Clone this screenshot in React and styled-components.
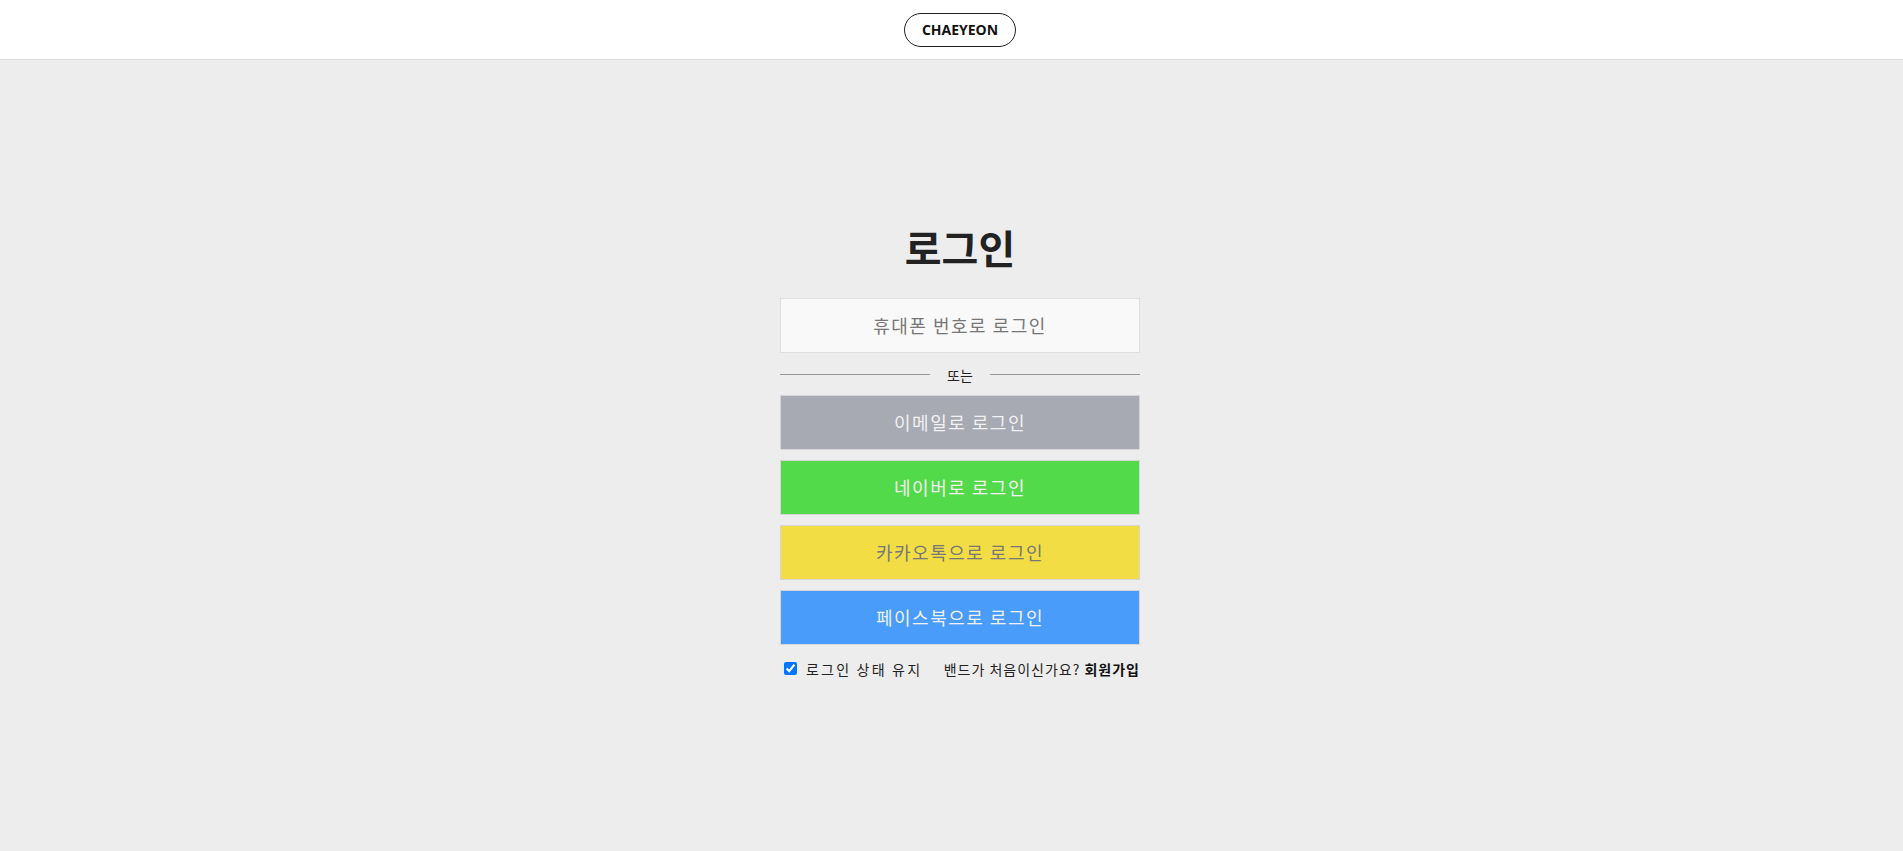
import React, { useState } from "react";
import styled, { createGlobalStyle } from "styled-components";

const GlobalStyle = createGlobalStyle`
    html, body {
        margin: 0;
        padding: 0;
        background-color: #ededed;
        font-family: "Open Sans", "Noto Sans CJK KR", sans-serif;
    }
`;

const Header = styled.header`
    height: 59px;
    background-color: #fff;
    border-bottom: 1px solid #dcdcdc;
    display: flex;
    align-items: center;
    justify-content: center;
    padding-left: 17px;
`;

const Logo = styled.button`
    width: 112px;
    height: 34px;
    border: 1px solid #222;
    border-radius: 17px;
    background-color: #fff;
    font-family: "Open Sans", sans-serif;
    font-weight: 700;
    font-size: 14px;
    color: #111;
    cursor: pointer;
    padding: 0;
`;

const Main = styled.main`
    min-height: calc(100vh - 60px);
    display: flex;
    align-items: center;
    justify-content: center;
    padding: 0 0 17px 17px;
    box-sizing: border-box;
`;

const Box = styled.div`
    width: 360px;
    display: flex;
    flex-direction: column;
    align-items: stretch;
`;

const Title = styled.h1`
    margin: 0 0 20px;
    text-align: center;
    font-family: "Noto Sans CJK KR", sans-serif;
    font-size: 40px;
    font-weight: 700;
    color: #222;
    line-height: 62px;
`;

const LoginButton = styled.button`
    height: 55px;
    margin-bottom: 10px;
    border: 1px solid ${(p) => p.$border || "#d6d6d6"};
    background-color: ${(p) => p.$bg};
    color: ${(p) => p.$color};
    font-family: "Noto Sans CJK KR", sans-serif;
    font-size: 18px;
    letter-spacing: 1.5px;
    cursor: pointer;
    padding: 0;
`;

const Divider = styled.div`
    display: flex;
    align-items: center;
    justify-content: space-between;
    height: 24px;
    margin: 0 0 8px;
    font-family: "Noto Sans CJK KR", sans-serif;
    font-size: 14px;
    color: #222;

    &::before,
    &::after {
        content: "";
        width: 150px;
        border-top: 1px solid #999;
    }
`;

const Footer = styled.div`
    display: flex;
    align-items: center;
    justify-content: space-between;
    margin-top: 4px;
    padding-left: 4px;
    font-family: "Noto Sans CJK KR", sans-serif;
    font-size: 14px;
    color: #222;
`;

const Keep = styled.label`
    display: flex;
    align-items: center;
    gap: 9px;
    letter-spacing: 2.2px;
    cursor: pointer;

    input {
        margin: 0;
        width: 13px;
        height: 13px;
    }
`;

const Join = styled.span`
    letter-spacing: 1px;

    b {
        font-weight: 700;
        color: #111;
    }
`;

const buttons = [
    { text: "이메일로 로그인", bg: "#a7a9b3", color: "#f1f1f1" },
    { text: "네이버로 로그인", bg: "#53da4a", color: "#f1f1f1" },
    { text: "카카오톡으로 로그인", bg: "#f2dd45", color: "#777" },
    { text: "페이스북으로 로그인", bg: "#4a9cfb", color: "#f1f1f1" },
];

const App = () => {
    const [keep, setKeep] = useState(true);

    return (
        <>
            <GlobalStyle />
            <Header>
                <Logo>CHAEYEON</Logo>
            </Header>
            <Main>
                <Box>
                    <Title>로그인</Title>
                    <LoginButton $bg="#f9f9f9" $color="#777" $border="#dedede">
                        휴대폰 번호로 로그인
                    </LoginButton>
                    <Divider>또는</Divider>
                    {buttons.map((b) => (
                        <LoginButton key={b.text} $bg={b.bg} $color={b.color}>
                            {b.text}
                        </LoginButton>
                    ))}
                    <Footer>
                        <Keep>
                            <input
                                type="checkbox"
                                checked={keep}
                                onChange={(e) => setKeep(e.target.checked)}
                            />
                            로그인 상태 유지
                        </Keep>
                        <Join>
                            밴드가 처음이신가요? <b>회원가입</b>
                        </Join>
                    </Footer>
                </Box>
            </Main>
        </>
    );
};

export default App;
